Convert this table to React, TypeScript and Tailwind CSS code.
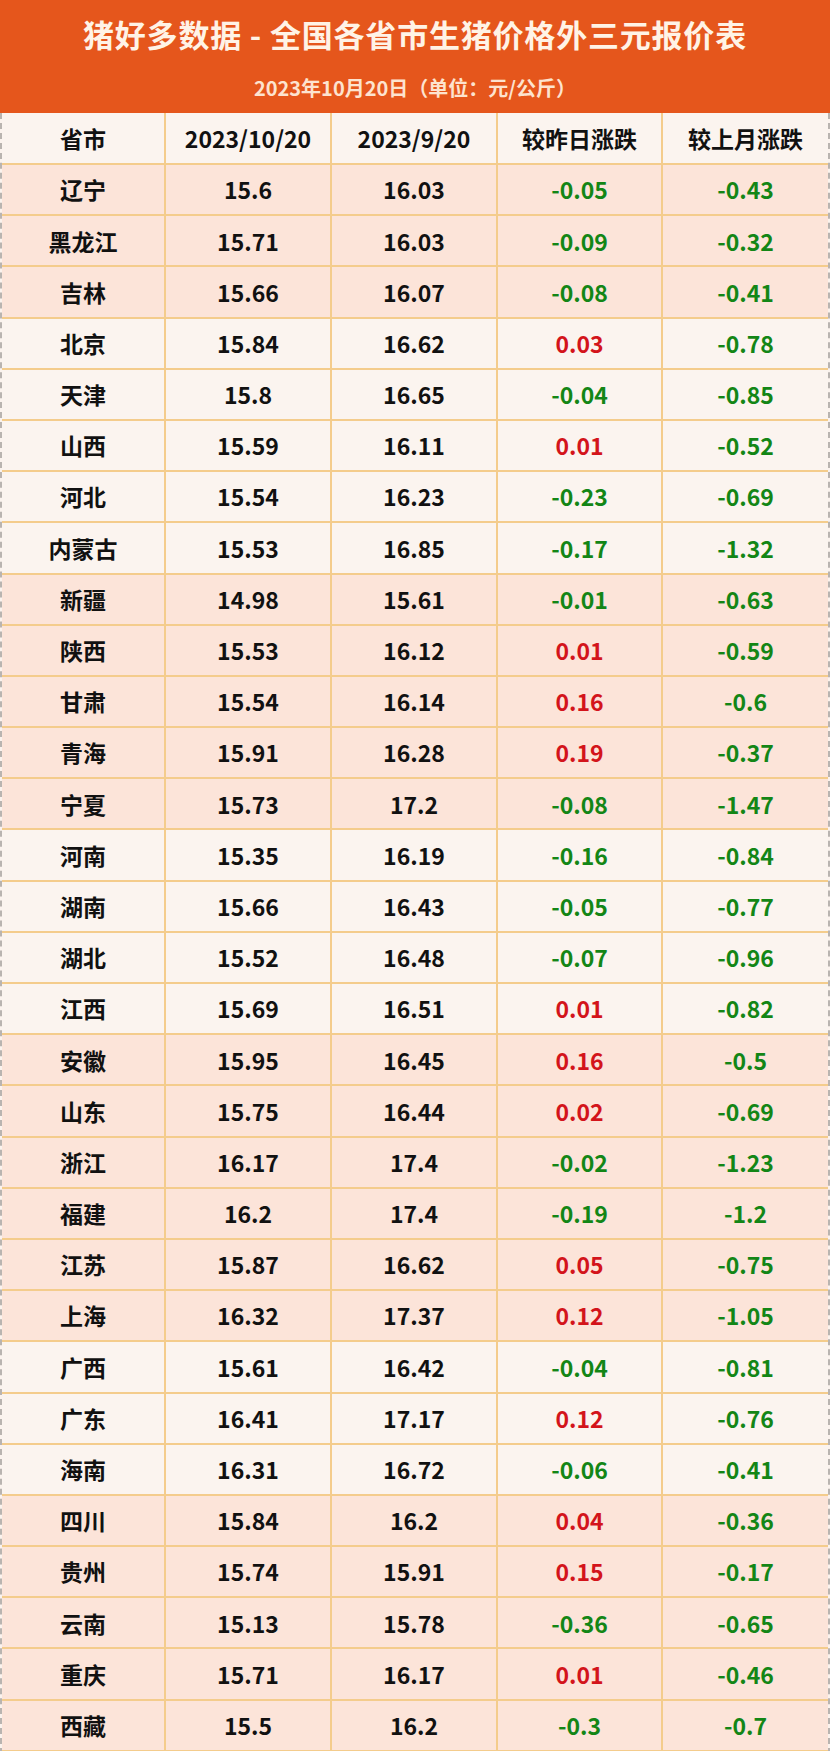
import React from "react";

type Row = { name: string; today: string; lastMonth: string; day: string; month: string; pink: boolean };

// groups of provinces share a background band
const groups: { pink: boolean; rows: [string, string, string, string, string][] }[] = [
  {
    pink: true,
    rows: [
      ["辽宁", "15.6", "16.03", "-0.05", "-0.43"],
      ["黑龙江", "15.71", "16.03", "-0.09", "-0.32"],
      ["吉林", "15.66", "16.07", "-0.08", "-0.41"],
    ],
  },
  {
    pink: false,
    rows: [
      ["北京", "15.84", "16.62", "0.03", "-0.78"],
      ["天津", "15.8", "16.65", "-0.04", "-0.85"],
      ["山西", "15.59", "16.11", "0.01", "-0.52"],
      ["河北", "15.54", "16.23", "-0.23", "-0.69"],
      ["内蒙古", "15.53", "16.85", "-0.17", "-1.32"],
    ],
  },
  {
    pink: true,
    rows: [
      ["新疆", "14.98", "15.61", "-0.01", "-0.63"],
      ["陕西", "15.53", "16.12", "0.01", "-0.59"],
      ["甘肃", "15.54", "16.14", "0.16", "-0.6"],
      ["青海", "15.91", "16.28", "0.19", "-0.37"],
      ["宁夏", "15.73", "17.2", "-0.08", "-1.47"],
    ],
  },
  {
    pink: false,
    rows: [
      ["河南", "15.35", "16.19", "-0.16", "-0.84"],
      ["湖南", "15.66", "16.43", "-0.05", "-0.77"],
      ["湖北", "15.52", "16.48", "-0.07", "-0.96"],
      ["江西", "15.69", "16.51", "0.01", "-0.82"],
    ],
  },
  {
    pink: true,
    rows: [
      ["安徽", "15.95", "16.45", "0.16", "-0.5"],
      ["山东", "15.75", "16.44", "0.02", "-0.69"],
      ["浙江", "16.17", "17.4", "-0.02", "-1.23"],
      ["福建", "16.2", "17.4", "-0.19", "-1.2"],
      ["江苏", "15.87", "16.62", "0.05", "-0.75"],
      ["上海", "16.32", "17.37", "0.12", "-1.05"],
    ],
  },
  {
    pink: false,
    rows: [
      ["广西", "15.61", "16.42", "-0.04", "-0.81"],
      ["广东", "16.41", "17.17", "0.12", "-0.76"],
      ["海南", "16.31", "16.72", "-0.06", "-0.41"],
    ],
  },
  {
    pink: true,
    rows: [
      ["四川", "15.84", "16.2", "0.04", "-0.36"],
      ["贵州", "15.74", "15.91", "0.15", "-0.17"],
      ["云南", "15.13", "15.78", "-0.36", "-0.65"],
      ["重庆", "15.71", "16.17", "0.01", "-0.46"],
      ["西藏", "15.5", "16.2", "-0.3", "-0.7"],
    ],
  },
];

const rows: Row[] = groups.flatMap((g) =>
  g.rows.map(([name, today, lastMonth, day, month]) => ({ name, today, lastMonth, day, month, pink: g.pink })),
);

const changeColor = (v: string) => (v.startsWith("-") ? "text-[#138616]" : "text-[#d3141b]");

function Cell({ children, last, className = "" }: { children: React.ReactNode; last?: boolean; className?: string }) {
  return (
    <div
      className={`flex items-center justify-center border-b-2 border-[#f4cc8c] ${
        last ? "" : "border-r-2"
      } ${className}`}
    >
      {children}
    </div>
  );
}

export default function App() {
  return (
    <div
      className="w-[830px] h-[1751px] bg-[#fbf3ee] flex flex-col font-bold"
      style={{ fontFamily: '"Noto Sans CJK SC", "Noto Sans", sans-serif' }}
    >
      {/* Orange title banner */}
      <div className="h-[113px] bg-[#e5561c] flex flex-col items-center shrink-0">
        <div className="mt-[13px] text-[31px] leading-[42px] text-[#fff3e6] tracking-[0.8px]">
          猪好多数据 - 全国各省市生猪价格外三元报价表
        </div>
        <div className="mt-[20px] text-[20px] leading-[26px] text-[#fde3cf]">
          2023年10月20日（单位：元/公斤）
        </div>
      </div>

      {/* Table */}
      <div className="flex-1 flex flex-col border-l-2 border-r-2 border-b-2 border-dashed border-[#b9b4b0]">
        <div className="grid grid-cols-[164px_166px_166px_165px_1fr] h-[52px] bg-[#fbf4ef] text-[23px] text-[#111]">
          <Cell>省市</Cell>
          <Cell>2023/10/20</Cell>
          <Cell>2023/9/20</Cell>
          <Cell>较昨日涨跌</Cell>
          <Cell last>较上月涨跌</Cell>
        </div>
        {rows.map((r) => (
          <div
            key={r.name}
            className={`grid grid-cols-[164px_166px_166px_165px_1fr] h-[51.2px] text-[23px] ${
              r.pink ? "bg-[#fce4d9]" : "bg-[#fbf4ef]"
            }`}
          >
            <Cell className="text-[#111]">{r.name}</Cell>
            <Cell className="text-[#111]">{r.today}</Cell>
            <Cell className="text-[#111]">{r.lastMonth}</Cell>
            <Cell className={changeColor(r.day)}>{r.day}</Cell>
            <Cell last className={changeColor(r.month)}>
              {r.month}
            </Cell>
          </div>
        ))}
      </div>
    </div>
  );
}
